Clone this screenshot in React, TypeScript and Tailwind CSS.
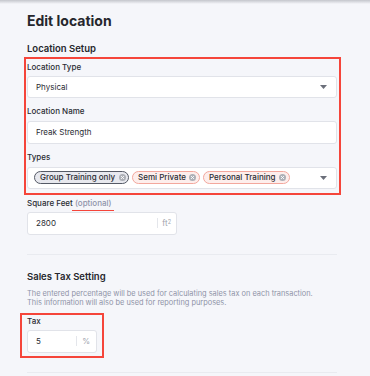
import React from "react";

function Caret() {
  return (
    <svg width="7" height="4" viewBox="0 0 7 4" className="shrink-0">
      <path d="M0 0 L7 0 L3.5 4 Z" fill="#6b6f7a" />
    </svg>
  );
}

function XCircle() {
  return (
    <svg width="7" height="7" viewBox="0 0 10 10" className="shrink-0">
      <circle cx="5" cy="5" r="5" fill="#adb0b7" />
      <path d="M3.3 3.3 L6.7 6.7 M6.7 3.3 L3.3 6.7" stroke="#ffffff" strokeWidth="1.3" strokeLinecap="round" />
    </svg>
  );
}

function Chip({ label, variant }: { label: string; variant: "gray" | "pink" }) {
  const cls =
    variant === "gray"
      ? "bg-[#e7e8ee] border-[#555a66]"
      : "bg-[#fdeeec] border-[#f3a79d]";
  return (
    <div className={`flex items-center h-[13px] rounded-full border ${cls} pl-[5px] pr-[2.5px] gap-[3.5px]`}>
      <span className="text-[8px] leading-[11px] font-medium text-[#2a2c33] whitespace-nowrap">{label}</span>
      <XCircle />
    </div>
  );
}

function Label({ children }: { children: React.ReactNode }) {
  return <div className="text-[8px] leading-[11px] font-medium text-[#2a2c33]">{children}</div>;
}

export default function App() {
  return (
    <div className="min-h-[376px] w-[370px] bg-[#f5f6fa] font-['Inter',sans-serif] overflow-hidden">
      <div className="h-[4px] bg-linear-to-b from-[#c4c6cc] to-[#f5f6fa]" />
      <div className="pl-[27px] w-[337px]">
        <h1 className="mt-[7.5px] text-[14px] leading-[18px] font-bold text-[#26272d]">Edit location</h1>
        <h2 className="mt-[12px] text-[9.5px] leading-[13px] font-semibold text-[#26272d]">Location Setup</h2>

        <div className="mt-[2.5px] -ml-[3.5px] w-[317px] border-2 border-[#f5453a] pl-[1.5px] pr-[1.5px] pt-[2.5px] pb-[3.5px]">
          <Label>Location Type</Label>
          <div className="mt-[3.5px] h-[22px] w-[310px] rounded-[3px] border border-[#e1e3e9] bg-white flex items-center pl-[8px] pr-[9px]">
            <span className="flex-1 text-[8px] text-[#2a2c33]">Physical</span>
            <Caret />
          </div>

          <div className="mt-[8px]">
            <Label>Location Name</Label>
          </div>
          <div className="mt-[3.5px] h-[23px] w-[310px] rounded-[3px] border border-[#e1e3e9] bg-white flex items-center pl-[8px]">
            <span className="text-[8px] text-[#2a2c33]">Freak Strength</span>
          </div>

          <div className="mt-[8.5px]">
            <Label>Types</Label>
          </div>
          <div className="mt-[3.5px] h-[22.5px] w-[310px] rounded-[3px] border border-[#e1e3e9] bg-white flex items-center pl-[6px] pr-[9px]">
            <div className="flex-1 flex items-center gap-[3px]">
              <Chip label="Group Training only" variant="gray" />
              <Chip label="Semi Private" variant="pink" />
              <Chip label="Personal Training" variant="pink" />
            </div>
            <Caret />
          </div>
        </div>

        <div className="mt-[3px] flex text-[8px] leading-[11px] font-medium">
          <span className="text-[#2a2c33]">Square Feet&nbsp;</span>
          <span className="relative text-[#8f94aa]">
            (optional)
            <span className="absolute left-[-2.5px] right-[-2px] top-[12px] h-[1.5px] bg-[#f5453a]" />
          </span>
        </div>
        <div className="mt-[3.5px] h-[22.5px] w-[150px] rounded-[3px] border border-[#e1e3e9] bg-white flex items-center pl-[8px] pr-[5px]">
          <span className="flex-1 text-[8px] text-[#2a2c33]">2800</span>
          <div className="h-[10px] w-px bg-[#e4e6eb] mr-[4px]" />
          <span className="text-[8px] text-[#a0a3ad]">
            ft<sup className="text-[5.5px]">2</sup>
          </span>
        </div>

        <div className="mt-[19.5px] h-px w-[310px] bg-[#e9ebf0]" />

        <h2 className="mt-[15px] text-[9.5px] leading-[13px] font-semibold text-[#26272d]">Sales Tax Setting</h2>
        <p className="mt-[7px] text-[7.4px] leading-[8.5px] text-[#8f93a7] w-[300px]">
          The entered percentage will be used for calculating sales tax on each transaction. This information will also be used for reporting purposes.
        </p>

        <div className="mt-[6px] -ml-[7px] w-[84px] border-2 border-[#f5453a] pl-[5px] pt-[0.5px] pb-[3px]">
          <Label>Tax</Label>
          <div className="mt-[3.5px] h-[22.5px] w-[70px] rounded-[3px] border border-[#e1e3e9] bg-white flex items-center pl-[8px] pr-[6px]">
            <span className="flex-1 text-[8px] text-[#2a2c33]">5</span>
            <div className="h-[10px] w-px bg-[#e4e6eb] mr-[5px]" />
            <span className="text-[8px] text-[#a0a3ad]">%</span>
          </div>
        </div>

        <div className="mt-[14px] h-px w-[310px] bg-[#e9ebf0]" />
      </div>
    </div>
  );
}
